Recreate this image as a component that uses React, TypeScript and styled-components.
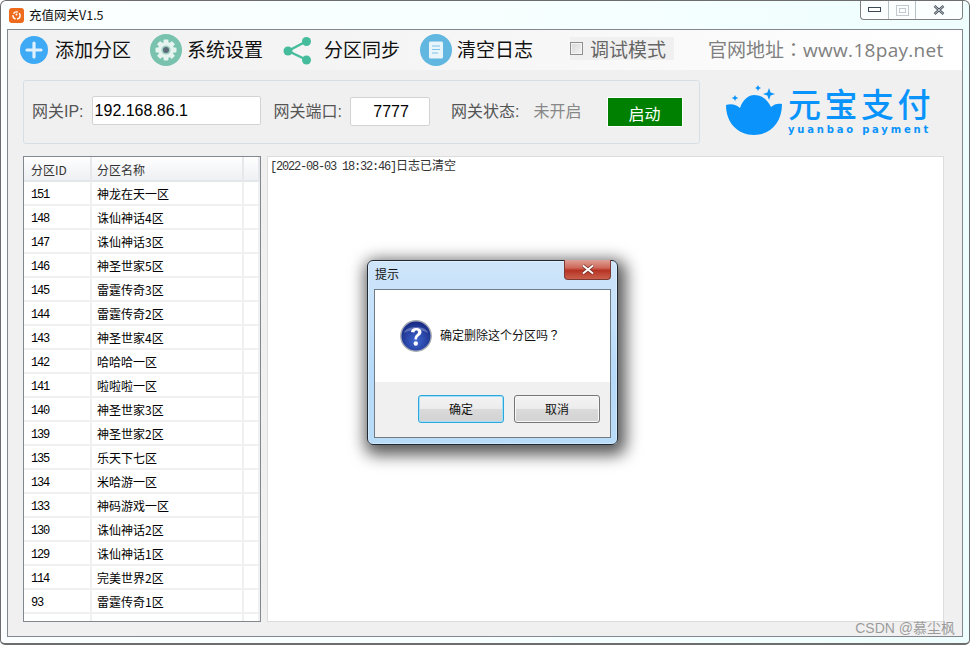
import React from 'react';
import styled, { createGlobalStyle } from 'styled-components';

const CJK = '"Noto Sans CJK SC", "Liberation Sans", sans-serif';
const LATIN_CJK = '"Liberation Sans", "Noto Sans CJK SC", sans-serif';

const rows: [string, string][] = [
  ['151', '神龙在天一区'],
  ['148', '诛仙神话4区'],
  ['147', '诛仙神话3区'],
  ['146', '神圣世家5区'],
  ['145', '雷霆传奇3区'],
  ['144', '雷霆传奇2区'],
  ['143', '神圣世家4区'],
  ['142', '哈哈哈一区'],
  ['141', '啦啦啦一区'],
  ['140', '神圣世家3区'],
  ['139', '神圣世家2区'],
  ['135', '乐天下七区'],
  ['134', '米哈游一区'],
  ['133', '神码游戏一区'],
  ['130', '诛仙神话2区'],
  ['129', '诛仙神话1区'],
  ['114', '完美世界2区'],
  ['93', '雷霆传奇1区'],
];

const Global = createGlobalStyle`
  html, body { margin: 0; padding: 0; background: #fff; }
  body { width: 970px; height: 645px; overflow: hidden; font-family: ${CJK}; }
  * { box-sizing: border-box; }
`;

const Win = styled.div`
  position: relative;
  width: 970px;
  height: 645px;
  display: flex;
  flex-direction: column;
  border: 1px solid #6d6d6d;
  border-bottom-width: 2px;
  border-radius: 6px 6px 5px 5px;
  background: linear-gradient(90deg, #fbffff 0%, #f6ffff 60%, #eefdfd 100%);
  overflow: hidden;
`;

const TitleBar = styled.div`
  height: 28px;
  flex: none;
  display: flex;
  align-items: flex-start;
  padding-left: 8px;
`;

const AppIcon = styled.svg`
  width: 15px;
  height: 15px;
  margin-top: 7px;
  flex: none;
`;

const TitleText = styled.div`
  margin: 5px 0 0 5px;
  font-size: 12.5px;
  line-height: 18px;
  color: #111;
  flex: 1;
`;

const Controls = styled.div`
  display: flex;
  height: 19px;
  margin-right: 6px;
  border: 1px solid #7f7f7f;
  border-top: none;
  border-radius: 0 0 4px 4px;
  background: #fbffff;
`;

const Ctl = styled.div<{ $w: number; $line?: boolean }>`
  width: ${p => p.$w}px;
  display: flex;
  align-items: center;
  justify-content: center;
  border-right: ${p => (p.$line ? '1px solid #b9c2c6' : 'none')};
`;

const Client = styled.div`
  flex: 1;
  margin: 0 6px 6px 6px;
  border: 1px solid #828790;
  background: #f0f0f0;
  display: flex;
  flex-direction: column;
  min-height: 0;
`;

const Toolbar = styled.div`
  height: 40px;
  flex: none;
  display: flex;
  align-items: center;
  padding-left: 12px;
  background: linear-gradient(90deg, #f1f1f1 0%, #f6f6f6 50%, #ffffff 100%);
`;

const ToolBtn = styled.div<{ $w: number; $gap: number }>`
  width: ${p => p.$w}px;
  display: flex;
  align-items: center;
  gap: ${p => p.$gap}px;
  font-size: 19px;
  color: #111;
  white-space: nowrap;
`;

const ToolLabel = styled.span`
  margin-top: -3px;
`;

const ToolIcon = styled.svg<{ $s: number }>`
  width: ${p => p.$s}px;
  height: ${p => p.$s}px;
  flex: none;
`;

const DebugBox = styled.label`
  width: 104px;
  height: 23px;
  margin-left: 37px;
  margin-top: -3px;
  background: #f0f0f0;
  display: flex;
  align-items: center;
  gap: 7px;
  font-size: 19px;
  color: #666;
  white-space: nowrap;
`;

const Check = styled.span`
  width: 13px;
  height: 13px;
  flex: none;
  border: 1px solid #8e8f8f;
  background: linear-gradient(135deg, #d8d8d8, #f4f4f4);
  box-shadow: inset 0 0 0 1px #f4f4f4;
`;

const SiteLink = styled.div`
  margin-left: 34px;
  margin-top: -3px;
  font: 19px ${CJK};
  color: #808080;
  white-space: nowrap;
`;

const SiteUrl = styled.span`
  font-family: "Open Sans", sans-serif;
  letter-spacing: 0.3px;
`;

const Punct = styled.span`
  font-family: "Noto Sans CJK TC", sans-serif;
`;

const Upper = styled.div`
  height: 84px;
  flex: none;
  display: flex;
  padding: 10px 0 0 15px;
`;

const Group = styled.div`
  width: 677px;
  height: 64px;
  flex: none;
  border: 1px solid #d6dfe6;
  border-radius: 3px;
  display: flex;
  align-items: center;
  padding: 0 0 1px 8px;
`;

const Label = styled.span<{ $ml?: number; $gray?: boolean }>`
  margin-left: ${p => p.$ml ?? 0}px;
  font: 16px/20px ${LATIN_CJK};
  color: ${p => (p.$gray ? '#888' : '#555')};
  white-space: nowrap;
`;

const Field = styled.div<{ $w: number; $ml: number; $center?: boolean; $up?: boolean }>`
  width: ${p => p.$w}px;
  height: 29px;
  flex: none;
  margin-left: ${p => p.$ml}px;
  margin-top: ${p => (p.$up ? -2 : 0)}px;
  background: #fff;
  border: 1px solid #d3d3d3;
  border-radius: 2px;
  font: 16px/27px ${LATIN_CJK};
  color: #000;
  padding-left: 2px;
  text-align: ${p => (p.$center ? 'center' : 'left')};
`;

const StartBtn = styled.div`
  width: 76px;
  height: 30px;
  flex: none;
  margin-left: 25px;
  background: #008000;
  border: 1px solid #fff;
  color: #fff;
  font-size: 16px;
  line-height: 30px;
  text-align: center;
`;

const Logo = styled.div`
  margin-left: 26px;
  margin-top: 5px;
  display: flex;
  align-items: flex-start;
  flex: none;
`;

const LogoMark = styled.svg`
  width: 60px;
  height: 52px;
  margin-right: 2px;
  flex: none;
`;

const LogoWords = styled.div`
  display: flex;
  flex-direction: column;
  color: #0a94fb;
`;

const LogoCn = styled.div`
  font-size: 33px;
  line-height: 36px;
  font-weight: 500;
  letter-spacing: 3.5px;
  white-space: nowrap;
`;

const LogoEn = styled.div`
  font: bold 10px/12px "DejaVu Sans", sans-serif;
  letter-spacing: 2.8px;
  white-space: nowrap;
  margin-top: 3px;
`;

const Lower = styled.div`
  flex: 1;
  min-height: 0;
  display: flex;
  gap: 6px;
  padding: 2px 18px 15px 15px;
`;

const ListBox = styled.div`
  width: 238px;
  height: 466px;
  flex: none;
  border: 1px solid #828790;
  background: #fff;
  overflow: hidden;
`;

const Row = styled.div<{ $head?: boolean }>`
  display: grid;
  grid-template-columns: 68px 152px 16px;
  height: ${p => (p.$head ? 25 : 24)}px;
  font: 12px/${p => (p.$head ? 26 : 24)}px ${CJK};
  color: #000;
  border-bottom: 2px solid #f0f0f0;
  background: ${p => (p.$head ? 'linear-gradient(#ffffff 0%, #f6f7f9 50%, #eef0f3 100%)' : '#fff')};
  ${p => p.$head && 'border-bottom-color: #e4e7ea; color: #333;'}
`;

const Cell = styled.div<{ $num?: boolean; $head?: boolean }>`
  padding-left: 5px;
  border-right: 2px solid ${p => (p.$head ? '#e6e8ec' : '#f0f0f0')};
  white-space: nowrap;
  &:first-child { padding-left: 7px; }
  ${p => p.$num && 'font-family: "Liberation Mono", monospace; letter-spacing: -1.2px; line-height: 26px;'}
`;

const LogBox = styled.div`
  width: 677px;
  height: 466px;
  flex: none;
  background: #fff;
  border: 1px solid #dcdcdc;
  padding: 0 2px;
  font: 12px/16px ${CJK};
  color: #333;
`;

const LogStamp = styled.span`
  font-family: "Liberation Mono", monospace;
  letter-spacing: -1.2px;
`;

const Watermark = styled.div`
  position: absolute;
  right: 14px;
  bottom: 6px;
  font: 14px/18px ${LATIN_CJK};
  color: rgba(120, 120, 120, 0.72);
  white-space: nowrap;
`;

const Dialog = styled.div`
  position: absolute;
  left: 366px;
  top: 259px;
  width: 251px;
  height: 185px;
  border: 1px solid #1f2933;
  border-radius: 6px;
  padding: 0 6px 6px 6px;
  background: linear-gradient(180deg, #cfe5fa 0%, #c3e0fb 35%, #b6daf9 60%, #b9dcf8 100%);
  box-shadow: 0 0 0 1px rgba(255,255,255,0.35) inset, 3px 5px 16px 5px rgba(0,0,0,0.65);
  display: flex;
  flex-direction: column;
`;

const DialogHead = styled.div`
  height: 28px;
  flex: none;
  display: flex;
  align-items: flex-start;
  justify-content: space-between;
  font-size: 12px;
  line-height: 26px;
  color: #111;
  padding-left: 1px;
`;

const CloseBtn = styled.div`
  width: 47px;
  height: 20px;
  margin-top: -1px;
  border: 1px solid #7e3a33;
  border-top: none;
  border-radius: 0 0 4px 4px;
  background: linear-gradient(180deg, #dfa095 0%, #cf6a5c 40%, #b73324 55%, #c9604c 100%);
  display: flex;
  align-items: center;
  justify-content: center;
`;

const DialogBody = styled.div`
  flex: 1;
  border: 1px solid #6f7b85;
  background: #f0f0f0;
  display: flex;
  flex-direction: column;
`;

const Message = styled.div`
  height: 92px;
  flex: none;
  background: #fff;
  display: flex;
  align-items: flex-start;
  padding: 30px 0 0 25px;
  gap: 8px;
  font-size: 12px;
  line-height: 30px;
  color: #111;
`;

const QuestionIcon = styled.svg`
  width: 32px;
  height: 32px;
  flex: none;
`;

const DialogFoot = styled.div`
  display: flex;
  justify-content: flex-end;
  gap: 10px;
  padding: 13px 10px 0 0;
`;

const DlgBtn = styled.div<{ $primary?: boolean }>`
  width: 86px;
  height: 28px;
  border: 1px solid ${p => (p.$primary ? '#2ba7dc' : '#757575')};
  border-radius: 3px;
  background: linear-gradient(180deg, #f3f3f3 0%, #ececec 48%, #dadada 52%, #d2d2d2 100%);
  box-shadow: inset 0 0 0 1px ${p => (p.$primary ? '#a5e0f7' : '#f8f8f8')};
  font-size: 12px;
  line-height: 26px;
  text-align: center;
  color: #111;
`;

const gearTeeth = [0, 45, 90, 135, 180, 225, 270, 315];

export default function App() {
  return (
    <>
      <Global />
      <Win>
        <TitleBar>
          <AppIcon viewBox="0 0 15 15">
            <rect width="15" height="15" rx="3" fill="#ee6a1c" />
            <circle cx="7.5" cy="7.5" r="3.6" fill="none" stroke="#fff" strokeWidth="1.4" strokeDasharray="5 1.5" />
            <circle cx="7.5" cy="6.5" r="1" fill="#fff" />
          </AppIcon>
          <TitleText>充值网关V1.5</TitleText>
          <Controls>
            <Ctl $w={28} $line>
              <svg width="13" height="6" viewBox="0 0 13 6"><rect x="0.5" y="0.5" width="12" height="4" fill="#fff" stroke="#3d4a55" /></svg>
            </Ctl>
            <Ctl $w={27} $line>
              <svg width="13" height="11" viewBox="0 0 13 11"><rect x="0.5" y="0.5" width="12" height="10" fill="none" stroke="#c3c9cd" /><rect x="3.5" y="3.5" width="6" height="4" fill="none" stroke="#c3c9cd" /></svg>
            </Ctl>
            <Ctl $w={46}>
              <svg width="12" height="10" viewBox="0 0 12 10"><path d="M1.5 1 L10.5 9 M10.5 1 L1.5 9" stroke="#4a5560" strokeWidth="2.4" /><path d="M1.5 1 L10.5 9 M10.5 1 L1.5 9" stroke="#dfe5e8" strokeWidth="0.8" /></svg>
            </Ctl>
          </Controls>
        </TitleBar>
        <Client>
          <Toolbar>
            <ToolBtn $w={130} $gap={7}>
              <ToolIcon $s={28} viewBox="0 0 28 28">
                <circle cx="14" cy="14" r="14" fill="#3ea9f5" />
                <path d="M14 7 V21 M7 14 H21" stroke="#dff1fd" strokeWidth="3.2" strokeLinecap="round" />
              </ToolIcon>
              <ToolLabel>添加分区</ToolLabel>
            </ToolBtn>
            <ToolBtn $w={133} $gap={5}>
              <ToolIcon $s={32} viewBox="0 0 32 32">
                <circle cx="16" cy="16" r="16" fill="#78c2ae" />
                {gearTeeth.map(a => (
                  <rect key={a} x="13.6" y="5.5" width="4.8" height="5" rx="0.8" fill="#e6f3ef" transform={`rotate(${a} 16 16)`} />
                ))}
                <circle cx="16" cy="16" r="8" fill="#e6f3ef" />
                <circle cx="16" cy="16" r="4.6" fill="#9dcfc1" />
                <circle cx="16" cy="16" r="3" fill="#5c6b78" />
              </ToolIcon>
              <ToolLabel>系统设置</ToolLabel>
            </ToolBtn>
            <ToolBtn $w={137} $gap={12}>
              <ToolIcon $s={29} viewBox="0 0 29 29">
                <path d="M24 5 L5 15 L24 24" fill="none" stroke="#45bd9c" strokeWidth="2.4" />
                <circle cx="23.5" cy="5.5" r="4.5" fill="#45bd9c" />
                <circle cx="5" cy="15" r="4.5" fill="#45bd9c" />
                <circle cx="23.5" cy="24" r="4.5" fill="#45bd9c" />
              </ToolIcon>
              <ToolLabel>分区同步</ToolLabel>
            </ToolBtn>
            <ToolBtn $w={113} $gap={5}>
              <ToolIcon $s={32} viewBox="0 0 32 32">
                <circle cx="16" cy="16" r="16" fill="#62b7e0" />
                <rect x="9" y="7.5" width="14" height="17" rx="1.5" fill="#e8f5fb" />
                <path d="M12 12 H20 M12 15.5 H20 M12 19 H18" stroke="#7cc4e6" strokeWidth="1.2" />
              </ToolIcon>
              <ToolLabel>清空日志</ToolLabel>
            </ToolBtn>
            <DebugBox>
              <Check />
              调试模式
            </DebugBox>
            <SiteLink>官网地址<Punct>：</Punct><SiteUrl>www.18pay.net</SiteUrl></SiteLink>
          </Toolbar>
          <Upper>
            <Group>
              <Label>网关IP:</Label>
              <Field $w={169} $ml={8} $up>192.168.86.1</Field>
              <Label $ml={13}>网关端口:</Label>
              <Field $w={80} $ml={8} $center>7777</Field>
              <Label $ml={21}>网关状态:</Label>
              <Label $ml={14} $gray>未开启</Label>
              <StartBtn>启动</StartBtn>
            </Group>
            <Logo>
              <LogoMark viewBox="0 0 60 52">
                <path d="M0 20 C5 18 11 20 14 23 C17 14 23 10 28 10 C36 10 42 15 45 22 C48 19 52 18 56 19 C56 38 44 50 28 50 C12 50 0 38 0 20 Z" fill="#0a94fb" />
                <path d="M43 3 L44.6 7.4 L49 9 L44.6 10.6 L43 15 L41.4 10.6 L37 9 L41.4 7.4 Z" fill="#0a94fb" />
                <path d="M32 0 L33 2 L35 3 L33 4 L32 6 L31 4 L29 3 L31 2 Z" fill="#0a94fb" />
                <path d="M9 10 L10 12 L12.4 13 L10 14 L9 16 L8 14 L5.6 13 L8 12 Z" fill="#0a94fb" />
              </LogoMark>
              <LogoWords>
                <LogoCn>元宝支付</LogoCn>
                <LogoEn>yuanbao payment</LogoEn>
              </LogoWords>
            </Logo>
          </Upper>
          <Lower>
            <ListBox>
              <Row $head>
                <Cell $head>分区ID</Cell>
                <Cell $head>分区名称</Cell>
                <Cell $head />
              </Row>
              {rows.map(([id, name]) => (
                <Row key={id}>
                  <Cell $num>{id}</Cell>
                  <Cell>{name}</Cell>
                  <Cell />
                </Row>
              ))}
              <Row>
                <Cell />
                <Cell />
                <Cell />
              </Row>
            </ListBox>
            <LogBox>
              <LogStamp>[2022-08-03 18:32:46]</LogStamp>日志已清空
            </LogBox>
          </Lower>
        </Client>
        <Watermark>CSDN @慕尘枫</Watermark>
        <Dialog>
          <DialogHead>
            提示
            <CloseBtn>
              <svg width="14" height="11" viewBox="0 0 14 11"><path d="M2 1.5 L12 9.5 M12 1.5 L2 9.5" stroke="#6b2a22" strokeWidth="3.4" /><path d="M2 1.5 L12 9.5 M12 1.5 L2 9.5" stroke="#fff" strokeWidth="2" /></svg>
            </CloseBtn>
          </DialogHead>
          <DialogBody>
            <Message>
              <QuestionIcon viewBox="0 0 32 32">
                <defs>
                  <radialGradient id="q" cx="50%" cy="65%" r="65%">
                    <stop offset="0%" stopColor="#3f66d0" />
                    <stop offset="100%" stopColor="#15277f" />
                  </radialGradient>
                </defs>
                <circle cx="16" cy="16" r="15.2" fill="url(#q)" stroke="#a8acb4" strokeWidth="1.4" />
                <path d="M4 13 C6 5 26 5 28 13 C22 9 10 9 4 13 Z" fill="#fff" opacity="0.28" />
                <path d="M11 12 C11 6.5 21.5 6.5 21.5 12 C21.5 16 17 15.5 17 19.5 H14.5 C14.5 14.5 18 14.5 18 12 C18 10 14.5 10 14.5 12.5 Z" fill="#fff" />
                <circle cx="15.8" cy="23.5" r="2.2" fill="#fff" />
              </QuestionIcon>
              <span>确定删除这个分区吗<Punct>？</Punct></span>
            </Message>
            <DialogFoot>
              <DlgBtn $primary>确定</DlgBtn>
              <DlgBtn>取消</DlgBtn>
            </DialogFoot>
          </DialogBody>
        </Dialog>
      </Win>
    </>
  );
}
